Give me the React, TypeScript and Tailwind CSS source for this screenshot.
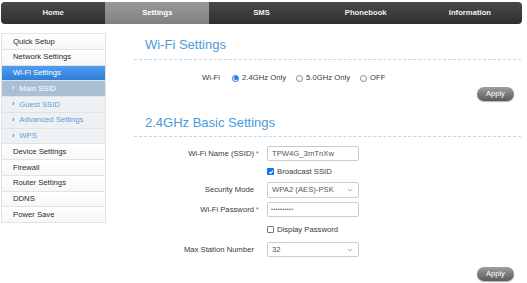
import { ChevronDown } from "lucide-react";

const TABS = ["Home", "Settings", "SMS", "Phonebook", "Information"];

const MENU = [
  { label: "Quick Setup", kind: "top" },
  { label: "Network Settings", kind: "top" },
  { label: "Wi-Fi Settings", kind: "active" },
  { label: "Main SSID", kind: "subActive" },
  { label: "Guest SSID", kind: "sub" },
  { label: "Advanced Settings", kind: "sub" },
  { label: "WPS", kind: "sub" },
  { label: "Device Settings", kind: "top" },
  { label: "Firewall", kind: "top" },
  { label: "Router Settings", kind: "top" },
  { label: "DDNS", kind: "top" },
  { label: "Power Save", kind: "top" },
];

function Radio({ checked, label }: { checked?: boolean; label: string }) {
  return (
    <label className="flex items-center gap-[3px]">
      <span
        className={`w-[7px] h-[7px] rounded-full border flex items-center justify-center ${
          checked ? "border-[#1a73e8]" : "border-[#888]"
        }`}
      >
        {checked && <span className="w-[4px] h-[4px] rounded-full bg-[#1a73e8]" />}
      </span>
      {label}
    </label>
  );
}

function Checkbox({ checked, label }: { checked?: boolean; label: string }) {
  return (
    <label className="flex items-center gap-[3px] text-[#3a3a3a]">
      {checked ? (
        <span className="w-[7px] h-[7px] rounded-[1px] bg-[#1a73e8] flex items-center justify-center">
          <svg width="6" height="6" viewBox="0 0 10 10">
            <path d="M2 5.2 L4.2 7.4 L8.2 2.6" stroke="white" strokeWidth="1.8" fill="none" />
          </svg>
        </span>
      ) : (
        <span className="w-[7px] h-[7px] rounded-[1px] border border-[#777] bg-white" />
      )}
      {label}
    </label>
  );
}

function ApplyButton() {
  return (
    <div className="flex justify-end pr-[7px]">
      <button className="w-[37px] h-[14px] rounded-full bg-gradient-to-b from-[#a0a0a0] to-[#5a5a5a] text-white text-[7.5px] shadow-[0_1px_1px_rgba(0,0,0,0.3)]">
        Apply
      </button>
    </div>
  );
}

function Row({
  label,
  required,
  className,
  children,
}: {
  label?: string;
  required?: boolean;
  className: string;
  children: React.ReactNode;
}) {
  return (
    <div className={`flex items-center ${className}`}>
      <div className="w-[120px] text-right text-[#3a3a3a]">{label}</div>
      <div className="w-[13px] pl-[2px] text-[#e53935]">{required ? "*" : ""}</div>
      {children}
    </div>
  );
}

export default function App() {
  return (
    <div className="w-[527px] h-[283px] bg-white overflow-hidden font-['Liberation_Sans',Arial,sans-serif] text-[7.7px]">
      {/* top navigation */}
      <div className="ml-[1px] mt-[2px] w-[521px] h-[22px] flex rounded-[4px] overflow-hidden bg-gradient-to-b from-[#4a4a4a] to-[#2f2f2f]">
        {TABS.map((t) => (
          <div
            key={t}
            className={`flex-1 flex items-center justify-center font-bold text-[7.7px] ${
              t === "Settings"
                ? "bg-gradient-to-b from-[#9a9a9a] to-[#808080] text-white"
                : "text-[#eeeeee]"
            }`}
          >
            {t}
          </div>
        ))}
      </div>

      <div className="flex">
        {/* side menu */}
        <div className="ml-[1px] mt-[9px] w-[105px] border border-[#e3e3e3] border-b-0 self-start">
          {MENU.map((m) => {
            const base = "h-[15.75px] flex items-center border-b border-[#e3e3e3]";
            if (m.kind === "active")
              return (
                <div key={m.label} className={`${base} pl-[11px] text-white bg-gradient-to-b from-[#4d9ef0] to-[#2e7fd6]`}>
                  {m.label}
                </div>
              );
            if (m.kind === "subActive" || m.kind === "sub")
              return (
                <div
                  key={m.label}
                  className={`${base} pl-[10px] gap-[5px] ${
                    m.kind === "subActive" ? "bg-[#a9bfd3] text-white" : "bg-[#eef1f4] text-[#5c9fd8]"
                  }`}
                >
                  <span className={`text-[7px] font-bold ${m.kind === "subActive" ? "text-white" : "text-[#2f7fd0]"}`}>›</span>
                  {m.label}
                </div>
              );
            return (
              <div key={m.label} className={`${base} pl-[11px] text-[#2a2a2a] bg-gradient-to-b from-white to-[#f7f7f7]`}>
                {m.label}
              </div>
            );
          })}
        </div>

        {/* main content */}
        <div className="ml-[28px] w-[387px]">
          <div className="pt-[13px] pb-[6px] pl-[11px] border-b border-dashed border-[#c3d7e6] text-[13px] leading-[16px] text-[#4b9ad9]">
            Wi-Fi Settings
          </div>

          <div className="mt-[13px] h-[10px] flex items-center text-[#3a3a3a]">
            <div className="w-[86px] text-right">Wi-Fi</div>
            <div className="ml-[12px] flex items-center gap-[10px]">
              <Radio checked label="2.4GHz Only" />
              <Radio label="5.0GHz Only" />
              <Radio label="OFF" />
            </div>
          </div>

          <div className="mt-[4px]">
            <ApplyButton />
          </div>

          <div className="mt-[6px] pt-[8px] pb-[5px] pl-[11px] border-b border-dashed border-[#c3d7e6] text-[13px] leading-[16px] text-[#4b9ad9]">
            2.4GHz Basic Settings
          </div>

          <Row label="Wi-Fi Name (SSID)" required className="mt-[9px] h-[15px]">
            <div className="w-[92px] h-[15px] border border-[#ccc] rounded-[2px] flex items-center px-[4px] text-[#555]">
              TPW4G_3mTnXw
            </div>
          </Row>
          <Row className="mt-[4px] h-[14px]">
            <Checkbox checked label="Broadcast SSID" />
          </Row>
          <Row label="Security Mode" className="mt-[3px] h-[16px]">
            <div className="w-[92px] h-[16px] border border-[#ccc] rounded-[2px] flex items-center justify-between px-[4px] text-[#555]">
              WPA2 (AES)-PSK
              <ChevronDown size={8} strokeWidth={1.5} className="text-[#666]" />
            </div>
          </Row>
          <Row label="Wi-Fi Password" required className="mt-[4px] h-[15px]">
            <div className="w-[92px] h-[15px] border border-[#ccc] rounded-[2px] flex items-center px-[3px] text-[#555] text-[5px] tracking-[0.5px]">
              ••••••••••
            </div>
          </Row>
          <Row className="mt-[6px] h-[14px]">
            <Checkbox label="Display Password" />
          </Row>
          <Row label="Max Station Number" className="mt-[5px] h-[15px]">
            <div className="w-[92px] h-[15px] border border-[#ccc] rounded-[2px] flex items-center justify-between px-[4px] text-[#555]">
              32
              <ChevronDown size={8} strokeWidth={1.5} className="text-[#666]" />
            </div>
          </Row>

          <div className="mt-[10px]">
            <ApplyButton />
          </div>
        </div>
      </div>
    </div>
  );
}
